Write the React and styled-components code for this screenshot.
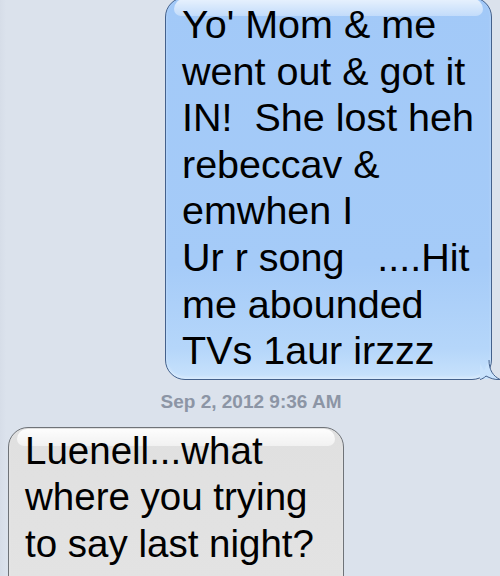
import React from 'react';
import styled, { createGlobalStyle } from 'styled-components';

const GlobalStyle = createGlobalStyle`
  html, body {
    margin: 0;
    padding: 0;
    background: #dbe2ec;
  }
  body {
    font-family: 'Liberation Sans', Arial, Helvetica, sans-serif;
    overflow: hidden;
  }
`

const Thread = styled.div`
  display: flex;
  flex-direction: column;
  width: 500px;
  height: 576px;
  overflow: hidden;
  background: linear-gradient(90deg, #d6dde8 0px, #dbe2ec 6px, #dbe2ec 100%);
`

const Row = styled.div`
  display: flex;
  justify-content: ${p => (p.$out ? 'flex-end' : 'flex-start')};
  padding: ${p => (p.$out ? '0 8px 0 0' : '0 0 0 8px')};
`

const Bubble = styled.div`
  position: relative;
  box-sizing: border-box;
  width: ${p => p.$width}px;
  margin-top: ${p => p.$top || 0}px;
  padding: ${p => (p.$out ? '3px 10px 5px 16px' : '0 10px 6px 16px')};
  border-radius: 20px;
  border: 1px solid ${p => (p.$out ? '#44618c' : '#6f7378')};
  background: ${p => p.$out
    ? 'linear-gradient(180deg, #a2c9f8 0%, #a5cbf8 70%, #b5d6fa 92%, #c8e2fc 100%)'
    : 'linear-gradient(180deg, #e0e0e0 0%, #e3e3e3 80%, #e6e6e6 100%)'};
  box-shadow: inset 0 -2px 3px ${p => (p.$out ? 'rgba(255,255,255,0.35)' : 'rgba(255,255,255,0.3)')};

  &::before {
    content: '';
    position: absolute;
    top: 1px;
    left: 8px;
    right: 8px;
    height: 17px;
    border-radius: 14px 14px 10px 10px;
    background: ${p => p.$out
      ? 'linear-gradient(180deg, rgba(255,255,255,0.75) 0%, rgba(255,255,255,0.35) 100%)'
      : 'linear-gradient(180deg, rgba(255,255,255,0.95) 0%, rgba(255,255,255,0.55) 100%)'};
  }
`

const Text = styled.div`
  position: relative;
  font-size: ${p => p.$size}px;
  line-height: 46.6px;
  color: #000;
  white-space: pre;
`

const Tail = styled.svg`
  position: absolute;
  right: -9px;
  bottom: -1px;
  width: 20px;
  height: 20px;
`

const Stamp = styled.div`
  margin: 12px 0 15px;
  text-align: center;
  font-size: 19px;
  font-weight: bold;
  color: #8c95a5;
  line-height: 20px;
  padding-left: 2px;
`

const App = () => {
  return (
    <>
      <GlobalStyle />
      <Thread>
        <Row $out>
          <Bubble $out $width={327} $top={-3}>
            <Text $size={39.5}>{`Yo' Mom & me
went out & got it
IN!  She lost heh
rebeccav &
emwhen I
Ur r song   ....Hit
me abounded
TVs 1aur irzzz`}</Text>
            <Tail viewBox="0 0 20 20">
              <path d="M0 4 C 4 10, 6 14, 9 19 L 0 19 Z" fill="#c8e2fc" />
              <path d="M9 0 C 9 10, 13 16, 20 19.5 C 14 20, 10 18, 6 16 C 4 18, 2 19, 0 19.5"
                fill="#c8e2fc" stroke="#44618c" strokeWidth="1" />
            </Tail>
          </Bubble>
        </Row>
        <Stamp>Sep 2, 2012 9:36 AM</Stamp>
        <Row>
          <Bubble $width={336}>
            <Text $size={38.5}>{`Luenell...what
where you trying
to say last night?
lol`}</Text>
          </Bubble>
        </Row>
      </Thread>
    </>
  );
}

export default App;
